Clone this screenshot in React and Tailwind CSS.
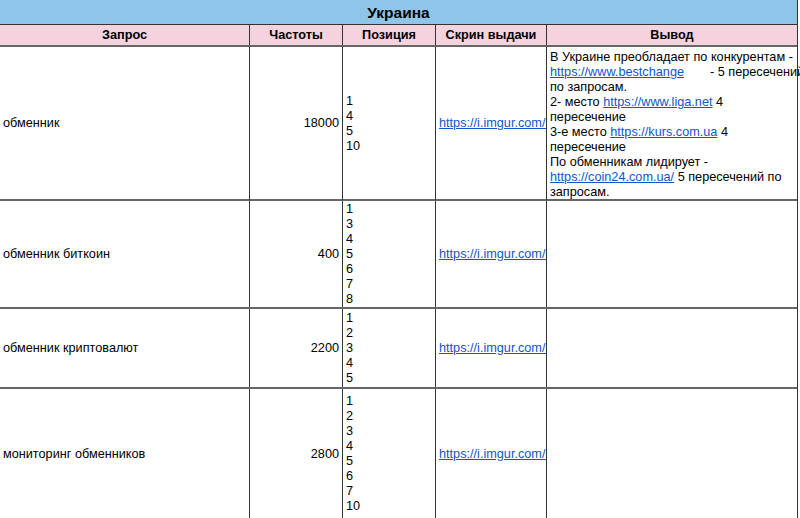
const link = "text-[#1155cc] underline";

function Pos({ items }) {
  return (
    <div className="flex flex-col">
      {items.map((n, i) => (
        <span key={i}>{n}</span>
      ))}
    </div>
  );
}

const rows = [
  { q: "обменник", f: "18000", p: [1, 4, 5, 10], url: "https://i.imgur.com/iXq2w", h: "h-[154px]" },
  { q: "обменник биткоин", f: "400", p: [1, 3, 4, 5, 6, 7, 8], url: "https://i.imgur.com/0Zk1a", h: "h-[108px]" },
  { q: "обменник криптовалют", f: "2200", p: [1, 2, 3, 4, 5], url: "https://i.imgur.com/sT4b", h: "h-[80px]" },
  { q: "мониторинг обменников", f: "2800", p: [1, 2, 3, 4, 5, 6, 7, 10], url: "https://i.imgur.com/dR9c", h: "h-[132px]" },
];

export default function App() {
  return (
    <div className="w-[800px] h-[518px] overflow-hidden bg-white text-[12.7px] leading-[15px] text-black" style={{ fontFamily: '"Liberation Sans", Arial, sans-serif' }}>
      <div className="w-[798px] border-r border-[#333]">
        <div className="h-[25px] bg-[#8fc5e9] flex items-center justify-center font-bold text-[15.5px] border-b border-[#333]">Украина</div>
        <div className="grid grid-cols-[250px_93px_93px_111px_1fr] h-[22px] bg-[#f4d3df] font-bold border-b-2 border-[#666]">
          <div className="flex items-center justify-center border-r border-[#333]">Запрос</div>
          <div className="flex items-center justify-center border-r border-[#333]">Частоты</div>
          <div className="flex items-center justify-center border-r border-[#333]">Позиция</div>
          <div className="flex items-center justify-center border-r border-[#333]">Скрин выдачи</div>
          <div className="flex items-center justify-center">Вывод</div>
        </div>
        {rows.map((r, i) => (
          <div key={i} className={`grid grid-cols-[250px_93px_93px_111px_1fr] ${r.h} border-b-2 border-[#666]`}>
            <div className="flex items-center px-[3px] border-r border-[#333]">{r.q}</div>
            <div className="flex items-center justify-end px-[3px] border-r border-[#333]">{r.f}</div>
            <div className="flex items-center px-[3px] border-r border-[#333]"><Pos items={r.p} /></div>
            <div className="flex items-center px-[3px] border-r border-[#333] overflow-hidden whitespace-nowrap"><span className={link}>{r.url}</span></div>
            <div className="px-[3px] pt-[3px] whitespace-nowrap">
              {i === 0 && (
                <div>
                  В Украине преобладает по конкурентам -<br />
                  <span className={link}>https://www.bestchange</span><span className="ml-[26px]">- 5 пересечений</span><br />
                  по запросам.<br />
                  2- место <span className={link}>https://www.liga.net</span> 4<br />
                  пересечение<br />
                  3-е место <span className={link}>https://kurs.com.ua</span> 4<br />
                  пересечение<br />
                  По обменникам лидирует -<br />
                  <span className={link}>https://coin24.com.ua/</span> 5 пересечений по<br />
                  запросам.
                </div>
              )}
            </div>
          </div>
        ))}
      </div>
    </div>
  );
}
